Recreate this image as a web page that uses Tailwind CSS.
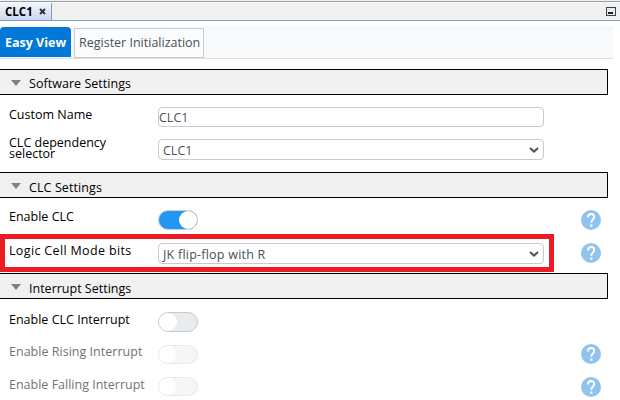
<!DOCTYPE html>
<html lang="en">
<head>
<meta charset="utf-8">
<title>CLC1</title>
<script src="https://cdn.jsdelivr.net/npm/@tailwindcss/browser@4"></script>
</head>
<body class="w-[620px] h-[400px] overflow-hidden bg-white text-black text-[13px] leading-[18px] font-['Open_Sans','Noto_Sans',sans-serif]">
<svg class="hidden"><defs>
<symbol id="help" viewBox="0 0 20 20"><circle cx="10" cy="10" r="10" fill="#90c3ee"/><path d="M6.9 7.5C6.9 5.3 8.2 4 10 4s3.2 1.3 3.2 3.1c0 2.2-2.9 2.5-2.9 5.7" fill="none" stroke="#fff" stroke-width="1.9"/><rect x="9.2" y="14.5" width="2.2" height="2.2" fill="#fff"/></symbol>
<symbol id="chev" viewBox="0 0 10 6"><path d="M1 1l4 3.6L9 1" fill="none" stroke="#505357" stroke-width="2"/></symbol>
</defs></svg>
<div class="h-[21px] border-b border-[#7b9ebd] bg-[#f0f0f0] flex flex-col">
  <div class="h-px shrink-0 bg-[#f0f0f0]"></div><div class="h-px shrink-0 bg-[#8d9fa9]"></div><div class="h-px shrink-0 bg-[#fafaf8]"></div>
  <div class="h-[17px] flex justify-between">
    <div class="w-[52px] h-[17px] border-r border-[#7b9ebd] bg-linear-to-b from-[#f2f5fc] to-[#ccd7ee] flex items-center pl-[5px]">
      <span class="text-[11.5px] font-bold leading-[17px] w-[34px] -mt-px">CLC1</span>
      <svg class="w-[7px] h-[7px]" viewBox="0 0 7 7"><path d="M1 1l5 5M6 1L1 6" stroke="#333" stroke-width="1.9"/></svg>
    </div>
    <svg class="w-[10px] h-[9px] mt-[4px] mr-[4px]" viewBox="0 0 10 9"><rect x=".5" y=".5" width="9" height="8" fill="#e8eaee" stroke="#3c414c"/><rect x="2" y="5" width="5" height="2" fill="#222"/></svg>
  </div>
</div>
<div class="mt-[5px] h-[33px] w-[613px] bg-[#f7f9fb] border-b border-[#dcdfe2] flex items-start gap-[3px]">
  <div class="w-[71px] h-[30px] mt-px bg-[#0078d7] rounded-t-[4px] text-white font-bold text-[12.5px] leading-[31px] pl-[5px] whitespace-nowrap"><span>Easy View</span></div>
  <div class="w-[130px] h-[30px] mt-[2px] border border-[#c8cacd] bg-[#fbfcfd] text-[#495057] leading-[27px] pl-[4px] whitespace-nowrap text-[12.5px]"><span>Register Initialization</span></div>
</div>
<div class="mt-[10px] w-[608px] h-[26px] bg-[#f0f0f0] border border-l-0 border-black flex items-center pl-[11px]"><svg class="w-[10px] h-[6px] mt-px" viewBox="0 0 10 6"><path d="M0 0h10L5 6z" fill="#808080"/></svg><span class="ml-[8px] mt-[3px] text-[12.5px] tracking-[0.04px]">Software Settings</span></div>
<div class="h-[77px] pl-[9px] pt-[12px] text-[12.5px]">
  <div class="h-[32px] flex"><span class="w-[149px] -mt-[1px]">Custom Name</span><div class="w-[386px] h-[20px] border border-[#c8cacd] rounded-[4px] text-[#495057] leading-[20px]">CLC1</div></div>
  <div class="h-[21px] flex"><span class="w-[149px] leading-[11px] -mt-[2px]">CLC dependency<br>selector</span><div class="w-[386px] h-[21px] border border-[#c8cacd] rounded-[4px] text-[#495057] leading-[21px] flex justify-between pl-[4px] pr-[4px]"><span>CLC1</span><svg class="w-[10px] h-[6px] mt-[7px]"><use href="#chev"/></svg></div></div>
</div>
<div class="w-[608px] h-[26px] bg-[#f0f0f0] border border-l-0 border-black flex items-center pl-[11px]"><svg class="w-[10px] h-[6px] mt-px" viewBox="0 0 10 6"><path d="M0 0h10L5 6z" fill="#808080"/></svg><span class="ml-[8px] mt-[5px] text-[12.5px] tracking-[0.1px]">CLC Settings</span></div>
<div class="h-[36px] flex items-start pl-[9px] pt-[12px] text-[12.5px]"><span class="w-[149px] -mt-[2px]">Enable CLC</span><div class="w-[40px] h-[20px] rounded-full bg-[#2196f3] border border-[#cdd2d6] flex justify-end"><div class="size-[18px] rounded-full bg-white"></div></div><svg class="ml-[383px] size-[20px]"><use href="#help"/></svg></div>
<div class="h-[39px] flex">
  <div class="w-[554px] h-[38px] border-[5px] border-[#ed1c24] flex items-start pl-[4px] pt-[4px] text-[12.5px]"><span class="w-[149px] -mt-[1px] tracking-[0.35px]">Logic Cell Mode bits</span><div class="w-[386px] h-[21px] border border-[#c8cacd] rounded-[4px] text-[#495057] leading-[21px] flex justify-between pl-[4px] pr-[4px]"><span class="tracking-[0.23px]">JK flip-flop with R</span><svg class="w-[10px] h-[6px] mt-[7px]"><use href="#chev"/></svg></div></div>
  <svg class="ml-[27px] mt-[9px] size-[20px]"><use href="#help"/></svg>
</div>
<div class="w-[608px] h-[26px] bg-[#f0f0f0] border border-l-0 border-black flex items-center pl-[11px]"><svg class="w-[10px] h-[6px] mt-px" viewBox="0 0 10 6"><path d="M0 0h10L5 6z" fill="#808080"/></svg><span class="ml-[8px] mt-[5px] text-[12.5px]">Interrupt Settings</span></div>
<div class="pl-[9px] pt-[12px] text-[12.5px]">
  <div class="h-[33px] flex"><span class="w-[149px]">Enable CLC Interrupt</span><div class="w-[40px] h-[20px] mt-px rounded-full bg-[#e9ecef] border border-[#c8cacd]"><div class="size-[18px] rounded-full bg-white"></div></div></div>
  <div class="h-[33px] flex text-[#737373]"><span class="w-[149px] -mt-px tracking-[0.02px]">Enable Rising Interrupt</span><div class="w-[40px] h-[19px] mt-px rounded-full bg-[#f5f6f8] border border-[#e7e8ea]"><div class="size-[17px] rounded-full bg-white"></div></div><svg class="ml-[383px] size-[20px]"><use href="#help"/></svg></div>
  <div class="h-[33px] flex text-[#737373]"><span class="w-[149px] -mt-px">Enable Falling Interrupt</span><div class="w-[40px] h-[19px] rounded-full bg-[#f5f6f8] border border-[#e7e8ea]"><div class="size-[17px] rounded-full bg-white"></div></div><svg class="ml-[383px] size-[20px]"><use href="#help"/></svg></div>
</div>
</body>
</html>
